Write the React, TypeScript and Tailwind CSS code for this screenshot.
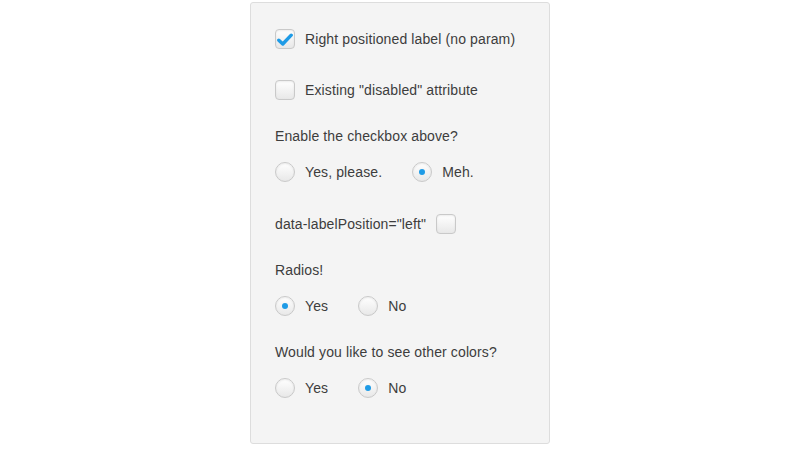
import React from 'react';

const font = { fontFamily: '"Liberation Sans", Arial, sans-serif' };

const Box: React.FC<{ checked?: boolean }> = ({ checked }) => (
  <span className="relative inline-flex h-[20px] w-[20px] shrink-0 items-center justify-center rounded-[4px] border border-[#c9c9c9] bg-gradient-to-b from-[#ffffff] to-[#e8e8e8] shadow-[inset_0_1px_2px_rgba(0,0,0,0.08)]">
    {checked && (
      <svg width="16" height="14" viewBox="0 0 16 14" className="mt-[1px]">
        <path d="M1.8 7.2 L5.8 11 L14.2 2.2" fill="none" stroke="#1e9be6" strokeWidth="3.4" strokeLinecap="round" strokeLinejoin="round" />
      </svg>
    )}
  </span>
);

const Radio: React.FC<{ checked?: boolean }> = ({ checked }) => (
  <span className="inline-flex h-[20px] w-[20px] shrink-0 items-center justify-center rounded-full border border-[#c9c9c9] bg-gradient-to-b from-[#ffffff] to-[#e8e8e8] shadow-[inset_0_1px_2px_rgba(0,0,0,0.08)]">
    {checked && <span className="h-[6px] w-[6px] rounded-full bg-[#1e9be6]" />}
  </span>
);

const RadioRow: React.FC<{ items: { label: string; checked?: boolean }[] }> = ({ items }) => (
  <div className="flex h-[20px] items-center">
    {items.map((it, i) => (
      <label key={i} className="flex items-center">
        <Radio checked={it.checked} />
        <span className="ml-[10px] mr-[30px]">{it.label}</span>
      </label>
    ))}
  </div>
);

export default function App() {
  return (
    <div className="h-[450px] w-[800px] bg-white text-[14px] tracking-[0.12px] text-[#3d3d3d]" style={font}>
      <div className="ml-[250px] pt-[2px]">
        <div className="flex h-[442px] w-[300px] flex-col rounded-[3px] border border-[#dddddd] bg-[#f4f4f4] pl-[24px] pt-[26px]">
          <label className="flex h-[20px] items-center">
            <Box checked />
            <span className="ml-[10px]">Right positioned label (no param)</span>
          </label>
          <label className="mt-[31px] flex h-[20px] items-center">
            <Box />
            <span className="ml-[10px]">Existing "disabled" attribute</span>
          </label>
          <div className="mt-[26px] flex h-[20px] items-center">Enable the checkbox above?</div>
          <div className="mt-[16px]">
            <RadioRow items={[{ label: 'Yes, please.' }, { label: 'Meh.', checked: true }]} />
          </div>
          <label className="mt-[32px] flex h-[20px] items-center">
            <span className="mr-[10px]">data-labelPosition="left"</span>
            <Box />
          </label>
          <div className="mt-[26px] flex h-[20px] items-center">Radios!</div>
          <div className="mt-[16px]">
            <RadioRow items={[{ label: 'Yes', checked: true }, { label: 'No' }]} />
          </div>
          <div className="mt-[26px] flex h-[20px] items-center">Would you like to see other colors?</div>
          <div className="mt-[16px]">
            <RadioRow items={[{ label: 'Yes' }, { label: 'No', checked: true }]} />
          </div>
        </div>
      </div>
    </div>
  );
}
